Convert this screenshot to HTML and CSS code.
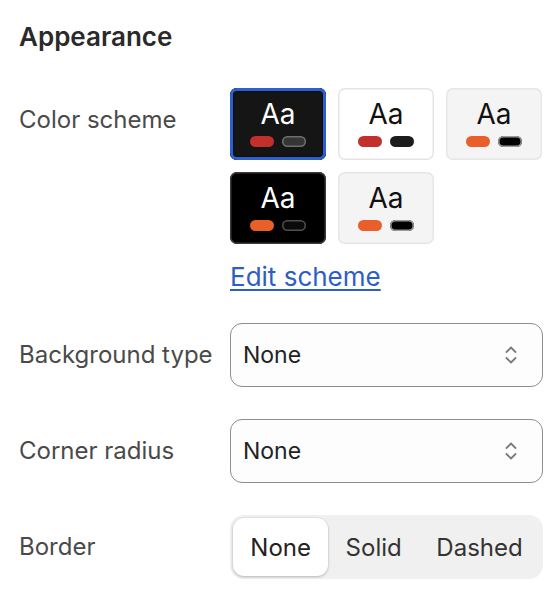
FILE: index.html
```html
<!DOCTYPE html>
<html>
<head>
<meta charset="utf-8">
<link rel="stylesheet" href="styles.css">
</head>
<body>
<div class="panel">
  <h2 class="title">Appearance</h2>

  <div class="row row-top">
    <div class="label label-top">Color scheme</div>
    <div class="control">
      <div class="swatches">
        <div class="swatch s1 selected">
          <span class="aa">Aa</span>
          <span class="pills"><span class="pill red"></span><span class="pill p-dark1"></span></span>
        </div>
        <div class="swatch s2">
          <span class="aa">Aa</span>
          <span class="pills"><span class="pill red"></span><span class="pill p-dark2"></span></span>
        </div>
        <div class="swatch s3">
          <span class="aa">Aa</span>
          <span class="pills"><span class="pill orange"></span><span class="pill p-black"></span></span>
        </div>
        <div class="swatch s4">
          <span class="aa">Aa</span>
          <span class="pills"><span class="pill orange"></span><span class="pill p-dark4"></span></span>
        </div>
        <div class="swatch s3">
          <span class="aa">Aa</span>
          <span class="pills"><span class="pill orange"></span><span class="pill p-black"></span></span>
        </div>
      </div>
      <a class="link" href="#">Edit scheme</a>
    </div>
  </div>

  <div class="row">
    <div class="label">Background type</div>
    <div class="select">
      <span class="value">None</span>
      <svg class="chev" width="16" height="24" viewBox="0 0 16 24"><path d="M3.5 9 L8 4.5 L12.5 9" fill="none" stroke="#7a7a7a" stroke-width="1.8" stroke-linecap="round" stroke-linejoin="round"/><path d="M3.5 15 L8 19.5 L12.5 15" fill="none" stroke="#7a7a7a" stroke-width="1.8" stroke-linecap="round" stroke-linejoin="round"/></svg>
    </div>
  </div>

  <div class="row">
    <div class="label">Corner radius</div>
    <div class="select">
      <span class="value">None</span>
      <svg class="chev" width="16" height="24" viewBox="0 0 16 24"><path d="M3.5 9 L8 4.5 L12.5 9" fill="none" stroke="#7a7a7a" stroke-width="1.8" stroke-linecap="round" stroke-linejoin="round"/><path d="M3.5 15 L8 19.5 L12.5 15" fill="none" stroke="#7a7a7a" stroke-width="1.8" stroke-linecap="round" stroke-linejoin="round"/></svg>
    </div>
  </div>

  <div class="row">
    <div class="label">Border</div>
    <div class="segmented">
      <span class="seg active">None</span>
      <span class="seg">Solid</span>
      <span class="seg">Dashed</span>
    </div>
  </div>
</div>
</body>
</html>
```

FILE: styles.css
```css
* { box-sizing: border-box; }
html, body { margin: 0; padding: 0; background: #ffffff; }
body {
  font-family: Inter, "Noto Sans", "Liberation Sans", sans-serif;
  color: #222;
}
.panel {
  padding: 22px 15px 0 19px;
  display: flex;
  flex-direction: column;
}
.title {
  margin: 0;
  font-size: 26px;
  line-height: 30px;
  font-weight: 600;
  color: #2a2a2a;
}
.row {
  display: grid;
  grid-template-columns: 211px 313px;
  align-items: center;
  margin-top: 32px;
}
.row-top {
  align-items: start;
  margin-top: 36px;
}
.label {
  font-size: 24px;
  line-height: 28px;
  color: #4a4a4a;
}
.label-top { padding-top: 18px; }
.control { display: flex; flex-direction: column; align-items: flex-start; }
.swatches {
  display: grid;
  grid-template-columns: repeat(3, 96px);
  gap: 12px;
}
.swatch {
  height: 72px;
  border-radius: 7px;
  display: flex;
  flex-direction: column;
  align-items: center;
  padding-top: 13px;
  gap: 9px;
}
.aa {
  font-size: 28px;
  line-height: 26px;
  font-weight: 400;
}
.pills { display: flex; gap: 8px; }
.pill {
  width: 24px;
  height: 11px;
  border-radius: 6px;
}
.red { background: #c3302c; }
.orange { background: #e95f2a; }
.s1 { background: #151515; color: #fff; box-shadow: inset 0 0 0 3px #2c5fcf, inset 0 0 0 4px #0b0b0b; }
.s2 { background: #fff; color: #111; box-shadow: inset 0 0 0 1.5px #e4e4e4; }
.s3 { background: #f4f4f4; color: #111; box-shadow: inset 0 0 0 1.5px #e6e6e6; }
.s4 { background: #000; color: #fff; box-shadow: inset 0 0 0 1.5px #3a3a3a; }
.p-dark1 { background: #353535; box-shadow: inset 0 0 0 1.5px #6e6e6e; }
.p-dark2 { background: #1c1c1c; }
.p-black { background: #000; box-shadow: inset 0 0 0 1.5px #9a9a9a; }
.p-dark4 { background: #0a0a0a; box-shadow: inset 0 0 0 1.5px #505050; }
.link {
  margin-top: 18px;
  font-size: 26px;
  line-height: 29px;
  color: #2d5ec6;
  text-decoration: underline;
  text-decoration-thickness: 2px;
  text-underline-offset: 3px;
}
.select {
  height: 64px;
  border: 1px solid #8e8e8e;
  border-radius: 12px;
  background: #fdfdfd;
  display: flex;
  align-items: center;
  justify-content: space-between;
  padding: 0 23px 0 12px;
}
.value { font-size: 23px; color: #222; }
.chev { display: block; }
.segmented {
  height: 64px;
  background: #f0f0f0;
  border-radius: 14px;
  padding: 3px;
  display: flex;
}
.seg {
  flex: 1 1 auto;
  display: flex;
  align-items: center;
  justify-content: center;
  font-size: 24px;
  color: #333;
  border-radius: 11px;
  padding: 0 12px;
}
.seg.active {
  background: #fff;
  color: #222;
  box-shadow: 0 1px 3px rgba(0,0,0,0.22), 0 0 0 0.5px rgba(0,0,0,0.06);
}
```
